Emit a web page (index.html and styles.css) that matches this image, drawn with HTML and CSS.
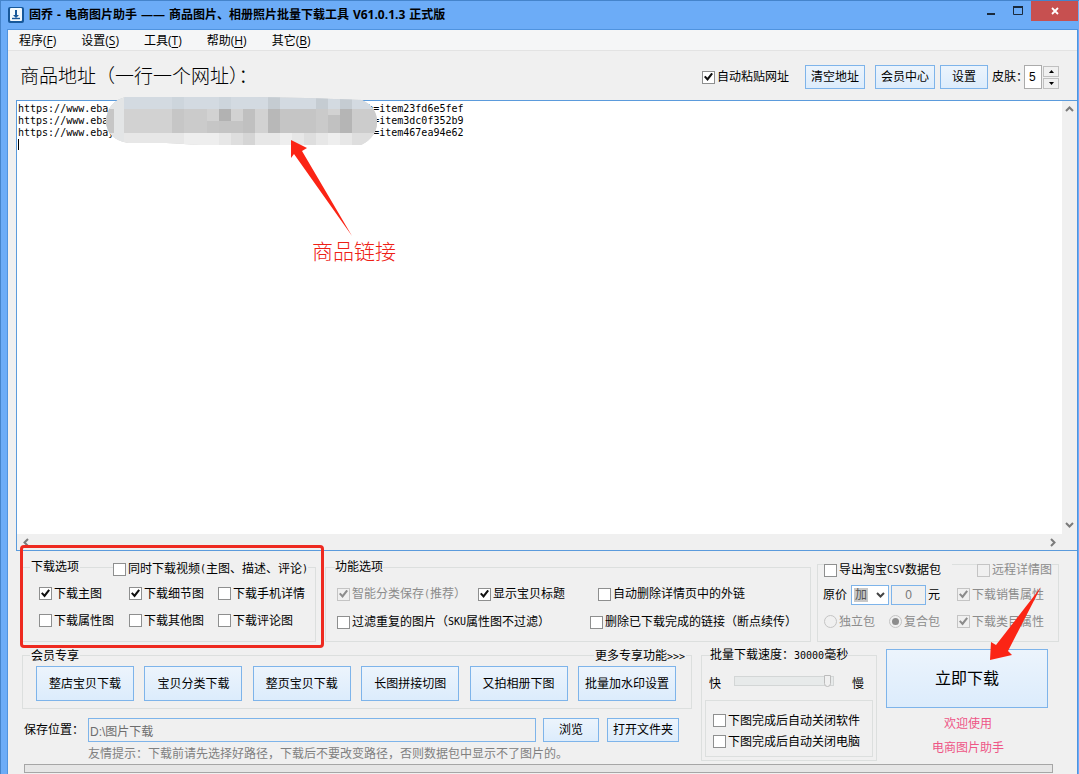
FILE: index.html
```html
<!DOCTYPE html>
<html lang="zh-CN">
<head>
<meta charset="utf-8">
<title>固乔 - 电商图片助手</title>
<link rel="stylesheet" href="styles.css">
</head>
<body>
<div class="window">
  <header class="titlebar">
    <svg class="app-icon" width="16" height="16" viewBox="0 0 16 16" aria-hidden="true">
      <rect width="16" height="16" rx="2" fill="#17589a"/>
      <rect x="2" y="1" width="12" height="13" rx="1" fill="#f4fafd"/>
      <path d="M7 3h2v5h2l-3 3-3-3h2z" fill="#17589a"/>
      <path d="M4 11.5h8" stroke="#17589a" stroke-width="1.4"/>
    </svg>
    <h1 class="title"><span>固乔</span> <span>-</span> <span>电商图片助手</span> <span>——</span> <span>商品图片、相册照片批量下载工具</span> <span>V61.0.1.3</span> <span>正式版</span></h1>
    <div class="win-buttons">
      <button class="win-btn" aria-label="最小化"><svg width="10" height="10" viewBox="0 0 10 10"><rect x="1" y="7" width="8" height="2" fill="#1a2a3c"/></svg></button>
      <button class="win-btn" aria-label="最大化"><svg width="10" height="10" viewBox="0 0 10 10"><path d="M.5 1v7.500h9V1" fill="none" stroke="#1a2a3c"/><path d="M0 1h10" stroke="#1a2a3c" stroke-width="2"/></svg></button>
      <button class="win-btn close" aria-label="关闭"><svg width="8" height="8" viewBox="0 0 8 8"><path d="M1 1l6 6M7 1L1 7" stroke="#fff" stroke-width="1.800"/></svg></button>
    </div>
  </header>

  <main class="client">
    <nav class="menu">
      <a href="#">程序(<u>F</u>)</a>
      <a href="#">设置(<u>S</u>)</a>
      <a href="#">工具(<u>T</u>)</a>
      <a href="#">帮助(<u>H</u>)</a>
      <a href="#">其它(<u>B</u>)</a>
    </nav>

    <div class="toolbar">
      <label class="address-title" for="urls">商品地址（一行一个网址）：</label>
      <label class="check paste"><input type="checkbox" checked>自动粘贴网址</label>
      <button class="btn tool clear">清空地址</button>
      <button class="btn tool">会员中心</button>
      <button class="btn tool small">设置</button>
      <label class="skin-label" for="skin">皮肤：</label>
      <input class="skin" id="skin" type="text" value="5">
      <div class="spin">
        <button aria-label="增加"><svg width="5" height="3" viewBox="0 0 5 3"><path d="M0 3h5L2.500 0z"/></svg></button>
        <button aria-label="减少"><svg width="5" height="3" viewBox="0 0 5 3"><path d="M0 0h5L2.500 3z"/></svg></button>
      </div>
    </div>

    <section class="editor">
      <textarea id="urls" class="urls" spellcheck="false" wrap="off">https://www.eba                                           h=item23fd6e5fef
https://www.eba                                            =item3dc0f352b9
https://www.ebay                                           =item467ea94e62
</textarea>
      <span class="caret"></span>
      <div class="vscroll">
        <svg width="9" height="6" viewBox="0 0 9 6"><path d="M1 5l3.500-3.500L8 5" /></svg>
        <svg width="9" height="6" viewBox="0 0 9 6"><path d="M1 1l3.500 3.500L8 1" /></svg>
      </div>
      <div class="hscroll">
        <svg width="6" height="9" viewBox="0 0 6 9"><path d="M5 1L1.500 4.500 5 8" /></svg>
        <svg width="6" height="9" viewBox="0 0 6 9"><path d="M1 1l3.500 3.500L1 8" /></svg>
      </div>
      <svg class="mosaic" width="272" height="49" viewBox="0 0 272 49" aria-hidden="true">
        <clipPath id="blob"><path d="M20 0H150L200 1 256 3Q271 10 271 25Q271 40 255 48H95L60 46H22Q0 42 0 23Q2 4 20 0z"/></clipPath>
        <g clip-path="url(#blob)">
          <rect width="272" height="49" fill="#d2d2d2"/>
          <rect width="272" height="12" fill="#d3dae1"/>
          <rect y="36" width="272" height="13" fill="#e7e7e7"/>
          <rect width="18" height="49" fill="#e3e5e6"/>
          <path d="M0 12h8v24H0z" fill="#c6c6c6"/>
          <path d="M66 12h12v24H66zM101 24h12v12h-12z" fill="#c6c6c6"/>
          <path d="M78 12h23v24H78z" fill="#cbcbcb"/>
          <path d="M113 12h12v12h-12z" fill="#b2b2b2"/>
          <path d="M113 24h35v12h-35z" fill="#c4c4c4"/>
          <path d="M137 12h12v24h-12z" fill="#c0c0c0"/>
          <path d="M162 12h12v24h-12z" fill="#b8b8b8"/>
          <path d="M174 12h36v24h-36z" fill="#c5c5c5"/>
          <path d="M210 12h12v24h-12z" fill="#cacaca"/>
          <path d="M222 18h12v18h-12z" fill="#c1c1c1"/>
          <path d="M234 12h12v24h-12z" fill="#b5b5b5"/>
          <path d="M246 12h26v24h-26z" fill="#cccccc"/>
          <path d="M162 0h12v12h-12zM210 0h12v12h-12zM234 0h12v12h-12z" fill="#c5ccd2"/>
          <path d="M66 0h12v12H66zM113 0h12v12h-12z" fill="#cdd5dc"/>
          <path d="M125 36h12v13h-12zM198 36h12v13h-12zM246 36h26v13h-26z" fill="#dedede"/>
          <path d="M137 36h12v13h-12z" fill="#d5d5d5"/>
          <path d="M78 36h35v13H78zM174 36h12v13h-12zM222 36h12v13h-12z" fill="#eeeeee"/>
        </g>
      </svg>
      <svg class="arrow-link" width="64" height="98" viewBox="0 0 64 98" aria-hidden="true"><path d="M1 0L17 8 12 11 62 96 4 14 1 18z" fill="#fb2415"/></svg>
      <span class="note">商品链接</span>
    </section>

    <section class="options">
      <fieldset class="group g-download" aria-label="下载选项">
        <div class="head">
          <span>下载选项</span>
          <label class="check"><input type="checkbox">同时下载视频<i class="m">(</i>主图、描述、评论<i class="m">)</i></label>
        </div>
        <div class="cells">
          <label class="check"><input type="checkbox" checked>下载主图</label>
          <label class="check"><input type="checkbox" checked>下载细节图</label>
          <label class="check"><input type="checkbox">下载手机详情</label>
          <label class="check"><input type="checkbox">下载属性图</label>
          <label class="check"><input type="checkbox">下载其他图</label>
          <label class="check"><input type="checkbox">下载评论图</label>
        </div>
        <div class="highlight"></div>
      </fieldset>

      <fieldset class="group g-feature" aria-label="功能选项">
        <div class="head"><span>功能选项</span></div>
        <div class="row first">
          <label class="check off"><input type="checkbox" checked disabled>智能分类保存<i class="m">(</i>推荐）</label>
          <label class="check"><input type="checkbox" checked>显示宝贝标题</label>
          <label class="check"><input type="checkbox">自动删除详情页中的外链</label>
        </div>
        <div class="row second">
          <label class="check"><input type="checkbox">过滤重复的图片（<i class="m">SKU</i>属性图不过滤）</label>
          <label class="check"><input type="checkbox">删除已下载完成的链接（断点续传）</label>
        </div>
      </fieldset>

      <fieldset class="group g-export" aria-label="导出淘宝CSV数据包">
        <div class="head">
          <label class="check wide"><input type="checkbox">导出淘宝<i class="m">CSV</i>数据包</label>
          <label class="check off"><input type="checkbox" disabled>远程详情图</label>
        </div>
        <div class="row">
          <div class="price">
            <label for="op">原价</label>
            <span class="select-box">
              <select id="op"><option>加</option><option>减</option></select>
              <svg width="9" height="6" viewBox="0 0 9 6" aria-hidden="true"><path d="M1 1l3.500 3.500L8 1"/></svg>
            </span>
            <input class="amount" type="text" value="0" aria-label="金额" disabled>
            <span>元</span>
          </div>
          <label class="check off"><input type="checkbox" checked disabled>下载销售属性</label>
        </div>
        <div class="row">
          <div class="packs">
            <label class="check off"><input type="radio" name="pack" disabled>独立包</label>
            <label class="check off"><input type="radio" name="pack" checked disabled>复合包</label>
          </div>
          <label class="check off"><input type="checkbox" checked disabled>下载类目属性</label>
        </div>
      </fieldset>
    </section>

    <section class="actions">
      <div class="left">
        <fieldset class="group g-member" aria-label="会员专享">
          <div class="head">
            <span>会员专享</span>
            <a href="#">更多专享功能<i class="m">&gt;&gt;&gt;</i></a>
          </div>
          <div class="member-buttons">
            <button class="btn">整店宝贝下载</button>
            <button class="btn">宝贝分类下载</button>
            <button class="btn">整页宝贝下载</button>
            <button class="btn">长图拼接切图</button>
            <button class="btn">又拍相册下图</button>
            <button class="btn">批量加水印设置</button>
          </div>
        </fieldset>
        <div class="save">
          <label for="path">保存位置：</label>
          <input id="path" class="path" type="text" value="D:\图片下载" readonly>
          <button class="btn browse">浏览</button>
          <button class="btn open">打开文件夹</button>
        </div>
        <p class="tip">友情提示：下载前请先选择好路径，下载后不要改变路径，否则数据包中显示不了图片的。</p>
      </div>

      <fieldset class="group g-speed" aria-label="批量下载速度">
        <div class="head"><span>批量下载速度：<i class="m">30000</i>毫秒</span></div>
        <div class="speed">
          <label for="speed">快</label>
          <input id="speed" type="range" min="0" max="30000" value="29500">
          <span>慢</span>
        </div>
        <div class="after">
          <label class="check"><input type="checkbox">下图完成后自动关闭软件</label>
          <label class="check"><input type="checkbox">下图完成后自动关闭电脑</label>
        </div>
      </fieldset>

      <div class="go">
        <button class="btn start">立即下载</button>
        <p>欢迎使用</p>
        <p>电商图片助手</p>
        <svg class="arrow-go" width="54" height="76" viewBox="0 0 54 76" aria-hidden="true"><path d="M53 1L20 65 24 69 2 74 3 56 8 59z" fill="#fb2415"/></svg>
      </div>
    </section>
    <div class="progress" role="progressbar" aria-label="下载进度"></div>
  </main>
</div>
</body>
</html>
```
FILE: styles.css
```css
* { box-sizing: border-box; }

body {
  margin: 0;
  font: 12px/16px "Liberation Sans", "Noto Sans CJK SC", sans-serif;
  color: #000;
}

button, input, select, textarea { font: inherit; color: inherit; margin: 0; padding: 0; }
p { margin: 0; }
a { color: inherit; text-decoration: none; }

.m { font: normal 10px/12px "DejaVu Sans Mono", monospace; }

.window {
  display: flex;
  flex-direction: column;
  height: 100vh;
  min-height: 700px;
  overflow: hidden;
  background: #6cacf7;
  border-top: 1px solid #4584cb;
  border-left: 1px solid #4584cb;
}

/* Title bar */
.titlebar {
  display: flex;
  align-items: center;
  height: 28px;
  padding-left: 7px;
}
.title {
  flex: 1;
  display: flex;
  gap: 4px;
  margin: 0 0 0 5px;
  font: bold 12px/16px "Open Sans", "Noto Sans CJK SC", sans-serif;
  white-space: nowrap;
}
.win-buttons { display: flex; align-self: flex-start; padding-right: 1px; }
.win-btn {
  display: flex;
  align-items: center;
  justify-content: center;
  width: 27px;
  height: 20px;
  border: 0;
  background: none;
}
.win-btn.close { width: 47px; background: #c75050; }

/* Client area */
.client {
  flex: 1;
  display: flex;
  flex-direction: column;
  min-height: 0;
  margin: 0 1px 0 6px;
  background: #f0f0f0;
  border: 1px solid #4f93df;
  border-bottom: 0;
}

.menu {
  display: flex;
  gap: 25px;
  height: 21px;
  padding-left: 11px;
  border-bottom: 1px solid #e3e3e3;
  background: #f5f6f7;
  font: 12px/22px "Open Sans", "Noto Sans CJK SC", sans-serif;
}
.menu u { text-underline-offset: 2px; }

.toolbar {
  display: flex;
  align-items: center;
  height: 49px;
  padding: 3px 18px 0 12px;
}
.address-title {
  flex: 1;
  padding-bottom: 4px;
  font: 300 19px/24px "Noto Sans CJK SC", sans-serif;
}

.btn {
  height: 24px;
  border: 1px solid #7eb4ea;
  background: linear-gradient(#ecf4fc, #dcecfc);
  white-space: nowrap;
}
.tool { width: 60px; }
.tool.clear { margin: 0 10px 0 16px; }
.tool.small { width: 48px; margin: 0 4px 0 5px; }
.skin-label { width: 32px; white-space: nowrap; }
.skin {
  width: 18px;
  height: 24px;
  padding-left: 4px;
  border: 1px solid #ababab;
  background: #fff;
}
.spin { display: grid; gap: 1px; margin-left: 1px; }
.spin button {
  display: flex;
  align-items: center;
  justify-content: center;
  width: 16px;
  height: 11px;
  border: 1px solid #c0c0c0;
  background: #f0f0f0;
}

/* Check boxes and radios */
.check {
  display: flex;
  align-items: center;
  white-space: nowrap;
}
.check .m { line-height: 16px; }
.check.off { color: #8c8c8c; }
.check input {
  flex: none;
  position: relative;
  width: 13px;
  height: 13px;
  margin-right: 2px;
  appearance: none;
  border: 1px solid #8e8f8f;
  background: #fff;
}
.check input:checked::after {
  content: "";
  position: absolute;
  inset: 1px;
  background: #111;
  clip-path: polygon(0 50%, 17% 36%, 38% 58%, 82% 4%, 100% 16%, 40% 94%);
}
.check.off input { border-color: #c4c4c4; background: #f0f0f0; }
.check.off input:checked::after { background: #8c8c8c; }
.check input[type="radio"] { border-radius: 50%; }
.check input[type="radio"]:checked::after {
  inset: 2px;
  border-radius: 50%;
  clip-path: none;
}

/* Address editor */
.editor {
  position: relative;
  flex: 1;
  min-height: 200px;
  display: grid;
  grid-template: 1fr 16px / 1fr 15px;
  margin-left: 8px;
  border: 1px solid #5b9bdc;
  border-right: 0;
  background: #fff;
}
.urls {
  width: 100%;
  height: 100%;
  padding: 2px 1px;
  border: 0;
  outline: 0;
  resize: none;
  overflow: hidden;
  background: #fff;
  font: 10px/12px "DejaVu Sans Mono", monospace;
}
.caret {
  position: absolute;
  left: 1px;
  top: 38px;
  width: 1px;
  height: 11px;
  background: #000;
}
.vscroll, .hscroll {
  display: flex;
  justify-content: space-between;
  align-items: center;
  background: #f0f0f0;
}
.vscroll { flex-direction: column; padding: 5px 0 6px; }
.hscroll { grid-column: 1 / 3; padding: 0 21px 0 6px; }
.editor svg path { stroke-width: 2; }
.vscroll path, .hscroll path { fill: none; stroke: #7b7b7b; }
.mosaic { position: absolute; left: 89px; top: -4px; }
.arrow-link { position: absolute; left: 273px; top: 39px; }
.note {
  position: absolute;
  left: 295px;
  top: 135px;
  font: 300 21px/28px "Noto Sans CJK SC", sans-serif;
  color: #ee2015;
}

/* Group boxes */
.group {
  min-width: 0;
  margin: 0;
  padding: 0;
  border: 1px solid #dcdfde;
}
.head { display: flex; height: 16px; margin-top: -9px; }
.head > * { background: #f0f0f0; }
.row { display: grid; align-items: center; }

.options {
  display: grid;
  grid-template-columns: 294fr 489fr 242fr;
  gap: 6px;
  padding: 13px 18px 0 14px;
}

.g-download { position: relative; margin-top: 3px; }
.g-download .head { gap: 33px; padding-left: 7px; }
.g-download .head span { padding: 0 1px; }
.g-download .head .check { margin: 2px 0 -2px; }
.cells {
  display: grid;
  grid-template-columns: 90px 89px 1fr;
  grid-auto-rows: 27px;
  padding: 5px 0 7px 16px;
}
.highlight {
  position: absolute;
  inset: -23px -9px -7px -3px;
  border: 3px solid #ee2a20;
  border-radius: 4px;
  pointer-events: none;
}

.g-feature { margin: 3px 0 0 3px; }
.g-feature .head { padding: 0 0 0 9px; margin-bottom: 5px; }
.g-feature .row { height: 28px; padding-left: 11px; }
.g-feature .first { grid-template-columns: 141px 120px 1fr; }
.g-feature .second { grid-template-columns: 253px 1fr; }

.g-export .head { margin: -3px 0 3px; padding-left: 6px; }
.g-export .wide { width: 128px; margin-right: 25px; }
.g-export .row { grid-template-columns: 134px 1fr; height: 27px; padding-left: 5px; }
.price, .packs { display: flex; align-items: center; }
.price label { width: 28px; }
.select-box { position: relative; display: flex; }
.select-box select {
  appearance: none;
  width: 38px;
  height: 20px;
  padding-left: 3px;
  border: 1px solid #7eb4ea;
  border-radius: 0;
  background: linear-gradient(#c8c8c8, #c8c8c8) 2px 2px / 14px 14px no-repeat #fff;
  color: #555;
}
.select-box svg {
  position: absolute;
  right: 4px;
  top: 7px;
  fill: none;
  stroke: #444;
  stroke-width: 2;
  pointer-events: none;
}
.amount {
  width: 35px;
  height: 20px;
  margin: 0 2px;
  border: 1px solid #7eb4ea;
  background: #f0f0f0;
  color: #777;
  text-align: center;
}
.packs { gap: 14px; padding-left: 1px; }

/* Lower area */
.actions {
  display: grid;
  grid-template-columns: 1fr 176px 173px;
  gap: 9px;
  height: 115px;
  margin-top: 7px;
  padding: 0 18px 0 14px;
}
.left, .g-speed { margin-top: 6px; }
.left { min-width: 0; }

.g-member .head { justify-content: space-between; padding: 0 5px 0 7px; margin-top: -8px; }
.g-member .head > * { padding: 0 1px; }
.member-buttons {
  display: flex;
  justify-content: space-between;
  gap: 8px;
  padding: 2px 15px 7px 13px;
}
.member-buttons .btn { flex: 0 0 98px; height: 35px; }

.save { display: flex; align-items: center; margin-top: 9px; padding: 0 13px 0 2px; }
.save label { width: 64px; white-space: nowrap; }
.path {
  flex: 1;
  min-width: 0;
  height: 24px;
  padding-left: 1px;
  border: 1px solid #7eb4ea;
  background: #f0f0f0;
  color: #6d6d6d;
}
.browse { width: 56px; margin: 0 8px 0 7px; }
.open { width: 72px; }
.tip { margin-top: 4px; padding-left: 66px; color: #808080; white-space: nowrap; }

.g-speed { height: 106px; }
.g-speed .head { padding-left: 8px; }
.speed { display: flex; align-items: center; height: 37px; padding: 4px 12px 0 7px; }
.speed input {
  appearance: none;
  width: 100px;
  height: 10px;
  margin: 0 auto 6px 13px;
  border: 1px solid #d3d6d6;
  background: #e7eaea;
}
.speed input::-webkit-slider-thumb {
  appearance: none;
  width: 7px;
  height: 12px;
  border: 1px solid #bcbcbc;
  border-radius: 0 0 4px 4px;
  background: #f0f0f0;
}
.after {
  display: grid;
  grid-auto-rows: 21px;
  margin: 0 3px;
  padding: 9px 0 4px 7px;
  border: 1px solid #dcdfde;
}

.go { position: relative; text-align: center; }
.start { display: block; width: 162px; height: 59px; font-size: 16px; }
.go p { width: 164px; line-height: 24px; color: #ee5586; }
.start + p { margin-top: 4px; }
.arrow-go { position: absolute; left: 102px; top: -63px; }

.progress {
  flex: none;
  height: 9px;
  margin: 0 24px 1px 16px;
  border: 1px solid #a6a6a6;
  background: #e6e6e6;
}
```
